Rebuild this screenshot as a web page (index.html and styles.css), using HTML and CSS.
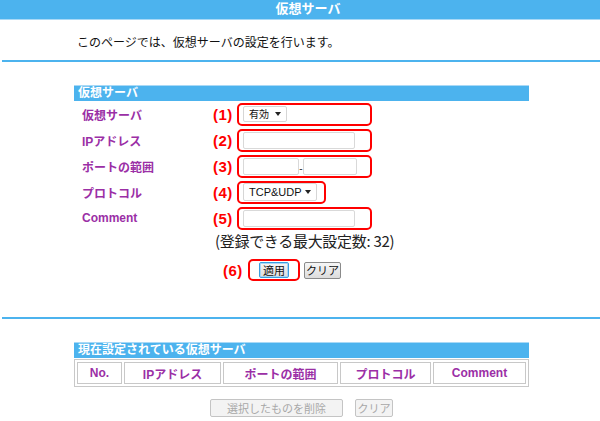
FILE: index.html
```html
<!DOCTYPE html>
<html lang="ja">
<head>
<meta charset="utf-8">
<title>仮想サーバ</title>
<link rel="stylesheet" href="styles.css">
</head>
<body>
<div class="topbar">仮想サーバ</div>
<p class="intro">このページでは、仮想サーバの設定を行います。</p>
<div class="rule"></div>

<div class="panel first">
  <div class="sechead">仮想サーバ</div>
  <div class="row">
    <div class="label">仮想サーバ</div>
    <div class="num">(1)</div>
    <div class="hl wide"><div class="sel sel-s">有効<span class="tri"></span></div></div>
  </div>
  <div class="row">
    <div class="label">IPアドレス</div>
    <div class="num">(2)</div>
    <div class="hl wide"><input class="txt txt-l" type="text"></div>
  </div>
  <div class="row">
    <div class="label">ポートの範囲</div>
    <div class="num">(3)</div>
    <div class="hl wide"><input class="txt txt-p1" type="text"><span class="dash">-</span><input class="txt txt-p2" type="text"></div>
  </div>
  <div class="row">
    <div class="label">プロトコル</div>
    <div class="num">(4)</div>
    <div class="hl narrow"><div class="sel sel-m">TCP&amp;UDP<span class="tri"></span></div></div>
  </div>
  <div class="row">
    <div class="label">Comment</div>
    <div class="num">(5)</div>
    <div class="hl wide"><input class="txt txt-l" type="text"></div>
  </div>
  <div class="note">(登録できる最大設定数: 32)</div>
  <div class="btnrow">
    <div class="num">(6)</div>
    <div class="hl btnbox"><button class="btn btn-focus">適用</button></div>
    <button class="btn btn-clear">クリア</button>
  </div>
</div>

<div class="rule rule2"></div>

<div class="panel second">
  <div class="sechead">現在設定されている仮想サーバ</div>
  <table class="list">
    <tr>
      <th class="c1">No.</th>
      <th class="c2">IPアドレス</th>
      <th class="c3">ポートの範囲</th>
      <th class="c4">プロトコル</th>
      <th class="c5">Comment</th>
    </tr>
  </table>
  <div class="bottom">
    <button class="btn dis del" disabled>選択したものを削除</button>
    <button class="btn dis clr" disabled>クリア</button>
  </div>
</div>
</body>
</html>
```
FILE: styles.css
```css
html, body {
  margin: 0;
  padding: 0;
  background: #ffffff;
  font-family: "Liberation Sans", "Noto Sans CJK JP", sans-serif;
  font-size: 12px;
  color: #222;
}
.topbar {
  height: 19px;
  line-height: 18px;
  background: #4cb3ee;
  border-bottom: 1px solid #a9d9f6;
  color: #fff;
  font-weight: bold;
  font-size: 13px;
  text-align: center;
  padding-left: 16px;
  box-sizing: content-box;
}
.intro {
  margin: 16px 0 0 77px;
  line-height: 14px;
  height: 14px;
  color: #111;
}
.rule {
  height: 2px;
  background: #4cb3ee;
  margin: 10px 0 0 2px;
}
.panel {
  width: 455px;
  margin-left: 74px;
}
.first { margin-top: 23px; }
.second { margin-top: 23px; }
.rule2 { margin-top: 36px; }
.sechead {
  height: 15px;
  line-height: 15px;
  background: #4cb3ee;
  color: #fff;
  font-weight: bold;
  padding-left: 4px;
  border-top: 1px solid #a9d9f6;
}
.row {
  display: flex;
  align-items: center;
  height: 26px;
}
.label {
  width: 131px;
  padding-left: 8px;
  color: #9b2fa6;
  font-weight: bold;
  font-size: 12px;
}
.num {
  width: 22px;
  color: #ff0000;
  font-weight: bold;
  font-size: 15px;
  letter-spacing: 0.5px;
}
.hl {
  margin-left: 2px;
  height: 19px;
  border: 2px solid #ff0000;
  border-radius: 5px;
  padding: 0 4px;
  display: flex;
  align-items: center;
}
.wide { width: 123px; }
.narrow { width: 77px; }
.sel {
  height: 16px;
  border: 1px solid #d6d6d6;
  border-radius: 2px;
  background: #fff;
  font-size: 10px;
  line-height: 15px;
  padding-left: 5px;
  box-sizing: border-box;
  position: relative;
  color: #111;
  white-space: nowrap;
}
.sel-s { width: 44px; }
.sel-m { width: 74px; height: 18px; line-height: 17px; font-size: 11px; }
.tri {
  position: absolute;
  right: 5px;
  top: 50%;
  margin-top: -2px;
  width: 0;
  height: 0;
  border-left: 3px solid transparent;
  border-right: 3px solid transparent;
  border-top: 4px solid #222;
}
.txt {
  height: 17px;
  border: 1px solid #d9d9d9;
  border-radius: 2px;
  box-sizing: border-box;
  padding: 0;
  margin: 0;
  background: #fff;
}
.txt-l { width: 112px; }
.txt-p1 { width: 56px; }
.txt-p2 { width: 54px; }
.dash {
  width: 4px;
  text-align: center;
  font-size: 10px;
  line-height: 10px;
  align-self: flex-end;
  margin-bottom: 2px;
  color: #333;
}
.note {
  margin: 2px 0 0 141px;
  font-size: 15px;
  line-height: 16px;
  height: 16px;
  color: #222;
  font-family: "Noto Sans CJK JP", "Liberation Sans", sans-serif;
  letter-spacing: -0.3px;
}
.btnrow {
  display: flex;
  align-items: center;
  margin: 10px 0 0 149px;
  height: 22px;
}
.btnrow .num { width: 25px; }
.btnbox {
  margin-left: 0;
  padding: 0 9px;
  height: 18px;
}
.btn {
  font-family: "Noto Sans CJK JP", "Liberation Sans", sans-serif;
  font-size: 11px;
  height: 16px;
  line-height: 12px;
  padding: 0;
  margin: 0;
  border: 1px solid #8a8a8a;
  border-radius: 2px;
  background: linear-gradient(#f6f6f6, #dcdcdc);
  color: #111;
  white-space: nowrap;
  text-align: center;
  box-sizing: border-box;
}
.btn-focus {
  border: 1px solid #3a9de0;
  width: 30px;
  box-shadow: inset 0 0 0 1px #a8d6f5;
}
.btn-clear {
  margin-left: 4px;
  width: 37px;
  height: 17px;
}
.list {
  width: 455px;
  border-collapse: separate;
  border-spacing: 2px;
  border: 1px solid #c8c8c8;
  margin-top: 1px;
}
.list th {
  height: 20px;
  border: 1px solid #c8c8c8;
  color: #9b2fa6;
  font-weight: bold;
  font-size: 12px;
  padding: 0;
}
.c1 { width: 43px; }
.c2 { width: 95px; }
.c3 { width: 113px; }
.c4 { width: 89px; }
.bottom {
  display: flex;
  justify-content: center;
  gap: 12px;
  margin-top: 12px;
}
.dis {
  color: #a8a8a8;
  border: 1px solid #c4c4c4;
  background: #f3f3f3;
  height: 18px;
}
.del { width: 133px; }
.clr { width: 38px; }
```
